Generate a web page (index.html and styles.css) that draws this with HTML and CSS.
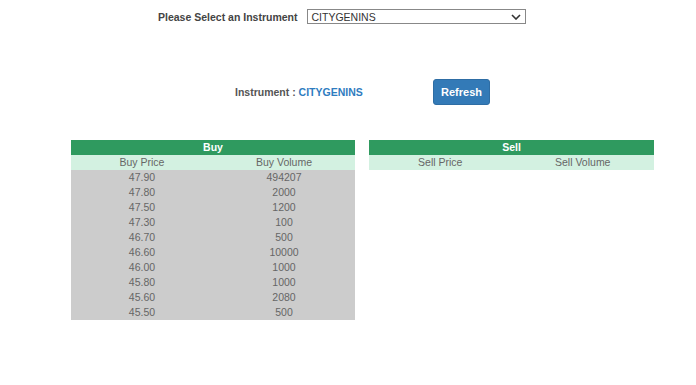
FILE: index.html
```html
<!DOCTYPE html>
<html>
<head>
<meta charset="utf-8">
<link rel="stylesheet" href="styles.css">
</head>
<body>
<div class="select-row">
  <span class="select-label">Please Select an Instrument</span>
  <div class="select-box">
    <span class="select-value">CITYGENINS</span>
    <svg class="chev" width="10" height="6" viewBox="0 0 10 6"><path d="M1 1 L5 5 L9 1" fill="none" stroke="#333" stroke-width="1.6"/></svg>
  </div>
</div>
<div class="inst-row">
  <span class="inst-label">Instrument : <span class="inst-name">CITYGENINS</span></span>
  <button class="refresh">Refresh</button>
</div>
<div class="tables">
  <table class="book">
    <tr><th colspan="2" class="head">Buy</th></tr>
    <tr class="sub"><td>Buy Price</td><td>Buy Volume</td></tr>
    <tr class="row"><td>47.90</td><td>494207</td></tr>
    <tr class="row"><td>47.80</td><td>2000</td></tr>
    <tr class="row"><td>47.50</td><td>1200</td></tr>
    <tr class="row"><td>47.30</td><td>100</td></tr>
    <tr class="row"><td>46.70</td><td>500</td></tr>
    <tr class="row"><td>46.60</td><td>10000</td></tr>
    <tr class="row"><td>46.00</td><td>1000</td></tr>
    <tr class="row"><td>45.80</td><td>1000</td></tr>
    <tr class="row"><td>45.60</td><td>2080</td></tr>
    <tr class="row"><td>45.50</td><td>500</td></tr>
  </table>
  <table class="book sell">
    <tr><th colspan="2" class="head">Sell</th></tr>
    <tr class="sub"><td>Sell Price</td><td>Sell Volume</td></tr>
  </table>
</div>
</body>
</html>
```
FILE: styles.css
```css
html, body { margin: 0; padding: 0; background: #fff; }
body { font-family: "Liberation Sans", Arial, sans-serif; font-size: 11px; color: #555; width: 696px; height: 385px; overflow: hidden; }
.select-row { display: flex; align-items: center; padding: 8px 0 0 158px; height: 17px; }
.select-label { font-weight: bold; font-size: 10.5px; color: #444; margin-right: 10px; }
.select-box { width: 217px; height: 13px; border: 1px solid #888; display: flex; align-items: center; justify-content: space-between; }
.select-value { font-size: 10.5px; color: #333; padding-left: 3px; }
.chev { margin-right: 4px; }
.inst-row { display: flex; align-items: center; margin-top: 54px; padding-left: 235px; height: 26px; }
.inst-label { font-weight: bold; font-size: 10.5px; color: #555; width: 198px; }
.inst-name { color: #2f7cc0; }
.refresh { width: 57px; height: 26px; background: #337ab7; border: 1px solid #2e6da4; border-radius: 3px; color: #fff; font-family: "Liberation Sans", Arial, sans-serif; font-weight: bold; font-size: 11px; padding: 0; }
.tables { display: flex; gap: 14px; padding-left: 71px; margin-top: 35px; }
.book { border-collapse: collapse; width: 284px; table-layout: fixed; }
.book.sell { width: 285px; align-self: flex-start; }
.book td, .book th { padding: 0; height: 15px; line-height: 15px; text-align: center; font-size: 10.5px; }
.head { background: #2f9a5f; color: #fff; font-weight: bold; }
.sub td { background: #d3f1e1; color: #666; }
.row td { background: #cccccc; color: #666; }
```
